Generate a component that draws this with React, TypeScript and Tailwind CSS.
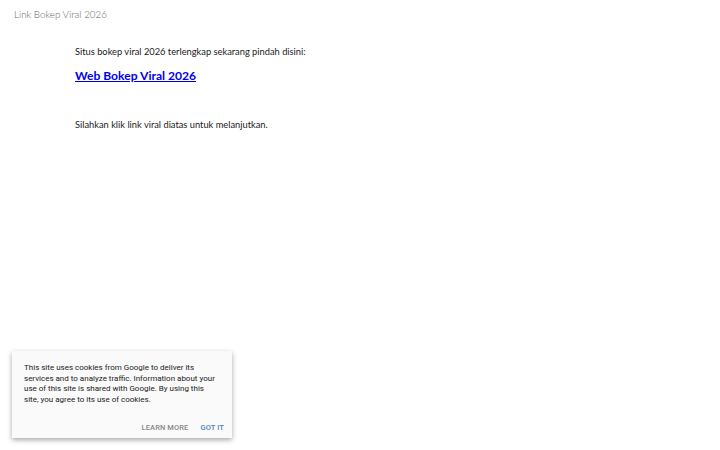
import React from "react";

// Simple landing page with a Blogger-style cookie notice
export default function App() {
  return (
    <div className="relative h-[450px] w-[720px] overflow-hidden bg-white font-['Lato',sans-serif] text-[#222]">
      <header className="px-[14px] pt-[8px]">
        <h1 className="text-[9.8px] font-light leading-[13px] text-[#666]">Link Bokep Viral 2026</h1>
      </header>

      <main className="pl-[75px] pt-[24px]">
        <p className="text-[9.3px] leading-[14px] text-[#1a1a1a]">
          Situs bokep viral 2026 terlengkap sekarang pindah disini:
        </p>
        <a
          href="#"
          className="mt-[9px] block text-[12.1px] font-bold leading-[16px] text-[#0000ee] underline"
        >
          Web Bokep Viral 2026
        </a>
        <p className="mt-[34px] text-[9.3px] leading-[14px] text-[#1a1a1a]">
          Silahkan klik link viral diatas untuk melanjutkan.
        </p>
      </main>

      <div className="absolute left-[12px] top-[351px] w-[220px] bg-[#fafafa] pl-[12px] pr-[8px] pt-[12px] pb-[5px] font-['Roboto',sans-serif] shadow-[0_2px_5px_rgba(0,0,0,0.35)]">
        <p className="pr-[6px] text-[8px] leading-[10.5px] text-[#212121]">
          This site uses cookies from Google to deliver its services and to analyze traffic. Information about your
          use of this site is shared with Google. By using this site, you agree to its use of cookies.
        </p>
        <div className="mt-[18px] flex justify-end gap-[12px] text-[7.5px] font-medium leading-[10px] tracking-[0.1px]">
          <span className="text-[#888]">LEARN MORE</span>
          <span className="text-[#4a7fc1]">GOT IT</span>
        </div>
      </div>
    </div>
  );
}
